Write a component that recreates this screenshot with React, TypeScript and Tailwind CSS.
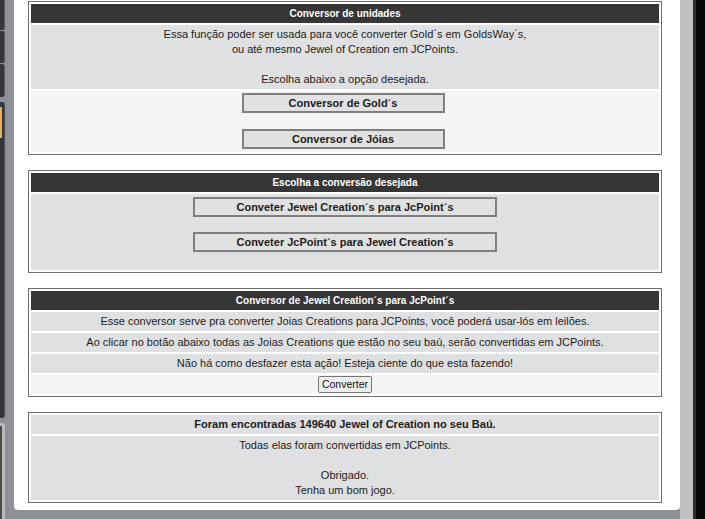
import React from "react";

const font = { fontFamily: '"Liberation Sans", Arial, sans-serif' };

function Header({ children }: { children: React.ReactNode }) {
  return (
    <div className="bg-[#363636] text-white font-bold text-[10px] leading-[15px] py-[2px] text-center">
      {children}
    </div>
  );
}

function Row({ children, light = false }: { children: React.ReactNode; light?: boolean }) {
  return (
    <div
      className={`${light ? "bg-[#f4f4f4]" : "bg-[#dfe0e1]"} text-[#1c1c1c] text-[11px] leading-[15px] py-[2px] text-center`}
    >
      {children}
    </div>
  );
}

function BigButton({ children, w }: { children: React.ReactNode; w: string }) {
  return (
    <div
      className={`${w} h-[20px] mx-auto border-2 border-[#7f7f7f] bg-[#e1e1e1] text-[#1c1c1c] font-bold text-[11px] leading-[16px] text-center`}
    >
      {children}
    </div>
  );
}

function Box({ children, className = "" }: { children: React.ReactNode; className?: string }) {
  return (
    <div className={`w-[634px] border border-[#6e6e6e] p-[2px] flex flex-col gap-[2px] bg-white ${className}`}>
      {children}
    </div>
  );
}

export default function App() {
  return (
    <div className="w-[705px] h-[519px] bg-[#8e9196] flex overflow-hidden" style={font}>
      {/* left sidebar strip */}
      <div className="w-[5px] flex flex-col shrink-0">
        <div className="h-[30px] bg-[#33373b] border-r border-[#5a5e62] rounded-br-[2px]" />
        <div className="h-[1px]" />
        <div className="h-[32px] bg-[#33373b] border-r border-[#5a5e62] rounded-r-[2px]" />
        <div className="h-[1px]" />
        <div className="h-[33px] bg-[#33373b] border-r border-[#5a5e62] rounded-r-[3px]" />
        <div className="h-[5px]" />
        <div className="h-[316px] bg-[#33373b] border-r border-[#4a4e52] rounded-r-[3px] pt-[5px]">
          <div className="w-[2px] h-[31px] bg-[#e8b35c]" />
        </div>
        <div className="h-[5px]" />
        <div className="flex-1 bg-[#b9b9b9] rounded-tr-[3px] flex">
          <div className="w-[2px] mt-[3px] bg-[#4a4a4a]" />
        </div>
      </div>
      <div className="w-[9px] shrink-0" />
      {/* white content panel */}
      <div className="w-[666px] shrink-0 flex flex-col">
        <div className="h-[510px] bg-white rounded-b-[4px] pl-[14px] pt-[1px]">
          <Box>
            <Header>Conversor de unidades</Header>
            <div className="bg-[#dfe0e1] text-[#1c1c1c] text-[11px] leading-[15px] py-[2px] text-center">
              <div>Essa função poder ser usada para você converter Gold´s em GoldsWay´s,</div>
              <div>ou até mesmo Jewel of Creation em JCPoints.</div>
              <div>&nbsp;</div>
              <div>Escolha abaixo a opção desejada.</div>
            </div>
            <div className="bg-[#f4f4f4] h-[61px] pt-[2px] pr-[4px] flex flex-col gap-[16px]">
              <BigButton w="w-[203px]">Conversor de Gold´s</BigButton>
              <BigButton w="w-[203px]">Conversor de Jóias</BigButton>
            </div>
          </Box>

          <Box className="mt-[15px]">
            <Header>Escolha a conversão desejada</Header>
            <div className="bg-[#dfe0e1] h-[76px] pt-[3px] flex flex-col gap-[15px]">
              <BigButton w="w-[304px]">Conveter Jewel Creation´s para JcPoint´s</BigButton>
              <BigButton w="w-[304px]">Conveter JcPoint´s para Jewel Creation´s</BigButton>
            </div>
          </Box>

          <Box className="mt-[15px]">
            <Header>Conversor de Jewel Creation´s para JcPoint´s</Header>
            <Row>Esse conversor serve pra converter Joias Creations para JCPoints, você poderá usar-lós em leilões.</Row>
            <Row>Ao clicar no botão abaixo todas as Joias Creations que estão no seu baú, serão convertidas em JCPoints.</Row>
            <Row>Não há como desfazer esta ação! Esteja ciente do que esta fazendo!</Row>
            <div className="bg-[#f4f4f4] h-[19px] flex items-center justify-center">
              <button className="h-[17px] px-[3px] bg-[#efefef] border border-[#767676] rounded-[2px] text-[10.5px] leading-[13px] text-[#111]">
                Converter
              </button>
            </div>
          </Box>

          <Box className="mt-[15px]">
            <div className="bg-[#dfe0e1] text-[#1c1c1c] font-bold text-[11px] leading-[15px] py-[2px] text-center">
              Foram encontradas 149640 Jewel of Creation no seu Baú.
            </div>
            <div className="bg-[#dfe0e1] text-[#1c1c1c] text-[11px] leading-[15px] pt-[2px] pb-[2px] text-center">
              <div>Todas elas foram convertidas em JCPoints.</div>
              <div>&nbsp;</div>
              <div>Obrigado.</div>
              <div>Tenha um bom jogo.</div>
            </div>
          </Box>
        </div>
      </div>
      {/* right scrollbar area */}
      <div className="w-[13px] shrink-0 bg-[#c0c0c0]" />
      <div className="w-[3px] shrink-0 bg-[#2e2e2e]" />
      <div className="flex-1 bg-[#080808]" />
    </div>
  );
}
